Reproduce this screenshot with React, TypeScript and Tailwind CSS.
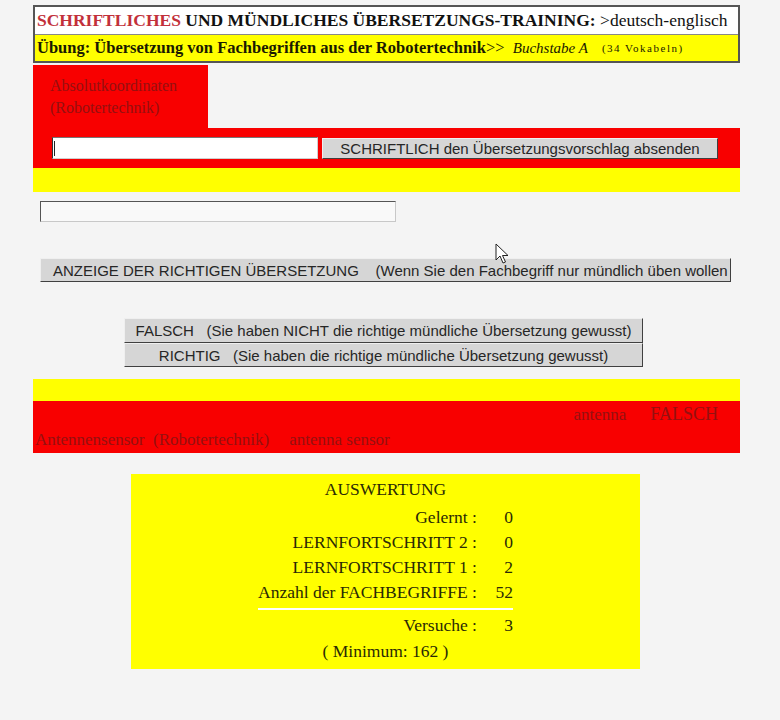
import React from "react";

const serif = { fontFamily: "'Liberation Serif', 'Times New Roman', serif" };

function Cursor() {
  return (
    <svg width="14" height="22" viewBox="0 0 14 22" fill="none">
      <path d="M1 1L1 17L5 13L8 20L10.5 19L7.5 12.5L13 12.5Z" fill="white" stroke="#222" strokeWidth="1" strokeLinejoin="round" />
    </svg>
  );
}

function GrayButton({ children, className }: { children: React.ReactNode; className: string }) {
  return (
    <div
      className={`bg-[#d6d6d6] border border-[#efefef] border-r-[#404040] border-b-[#404040] text-[15px] leading-none text-[#262626] whitespace-pre overflow-hidden flex items-center font-['Liberation_Sans',Arial,sans-serif] ${className}`}
    >
      {children}
    </div>
  );
}

const stats: [string, string][] = [
  ["Gelernt :", "0"],
  ["LERNFORTSCHRITT 2 :", "0"],
  ["LERNFORTSCHRITT 1 :", "2"],
  ["Anzahl der FACHBEGRIFFE :", "52"],
];

export default function App() {
  return (
    <div className="relative w-[780px] h-[720px] bg-[#f4f4f4] pt-[5px] overflow-hidden" style={serif}>
      <div className="ml-[33px] w-[707px] flex flex-col">
        {/* ── Title box ── */}
        <div className="border-2 border-[#555]">
          <div className="bg-white h-[27px] flex items-center px-[2px] text-[17.5px] font-bold text-[#111] whitespace-nowrap overflow-hidden">
            <span className="text-[#c2303a]">SCHRIFTLICHES</span>
            <span>&nbsp;UND MÜNDLICHES ÜBERSETZUNGS-TRAINING:</span>
            <span className="font-normal">&nbsp;&gt;deutsch-englisch</span>
          </div>
          <div className="bg-[#ffff00] h-[27px] border-t border-[#888] flex items-center px-[2px] text-[16.5px] text-[#1a1a00] whitespace-nowrap overflow-hidden">
            <span className="font-bold">Übung: Übersetzung von Fachbegriffen aus der Robotertechnik</span>
            <span>&gt;&gt;&nbsp;&nbsp; </span>
            <span className="italic text-[15px]">Buchstabe A</span>
            <span className="text-[11px] tracking-[1.5px] ml-[14px]">(34 Vokabeln)</span>
          </div>
        </div>

        {/* ── Term tab ── */}
        <div className="mt-[2px] w-[175px] h-[63px] bg-[#f80000] pl-[17px] pt-[10px] text-[16px] leading-[22px] text-[#951010]">
          <div>Absolutkoordinaten</div>
          <div>(Robotertechnik)</div>
        </div>

        {/* ── Written answer bar ── */}
        <div className="h-[40px] bg-[#f80000] flex items-center pl-[19px]">
          <div className="w-[266px] h-[22px] bg-white border border-[#cfcfcf] border-l-[#333] border-t-[#777] flex items-center">
            <div className="w-px h-[15px] bg-[#222] ml-[1px]" />
          </div>
          <GrayButton className="ml-[4px] w-[396px] h-[21px] justify-center">
            SCHRIFTLICH den Übersetzungsvorschlag absenden
          </GrayButton>
        </div>
        <div className="h-[24px] bg-[#ffff00]" />

        {/* ── Answer field ── */}
        <div className="mt-[9px] ml-[7px] w-[356px] h-[21px] bg-[#f9f9f9] border border-[#c8c8c8] border-t-[#555] border-l-[#555]" />

        <GrayButton className="mt-[36px] ml-[7px] w-[691px] h-[24px] pl-[12px]">
          {"ANZEIGE DER RICHTIGEN ÜBERSETZUNG    (Wenn Sie den Fachbegriff nur mündlich üben wollen"}
        </GrayButton>

        {/* ── Oral answer buttons ── */}
        <div className="mt-[36px] ml-[91px] w-[519px] flex flex-col">
          <GrayButton className="h-[25px] justify-center">
            {"FALSCH   (Sie haben NICHT die richtige mündliche Übersetzung gewusst)"}
          </GrayButton>
          <GrayButton className="h-[24px] justify-center">
            {"RICHTIG   (Sie haben die richtige mündliche Übersetzung gewusst)"}
          </GrayButton>
        </div>

        {/* ── Result ── */}
        <div className="mt-[12px] h-[22px] bg-[#ffff00]" />
        <div className="h-[52px] bg-[#f80000] text-[#951010] flex flex-col">
          <div className="flex justify-end items-end gap-[24px] pr-[22px] h-[22px]">
            <span className="text-[17px] leading-none">antenna</span>
            <span className="text-[18px] leading-none">FALSCH</span>
          </div>
          <div className="flex gap-[20px] pl-[2px] mt-[7px] text-[17px] leading-[20px]">
            <span>Antennensensor&nbsp; (Robotertechnik)</span>
            <span>antenna sensor</span>
          </div>
        </div>

        {/* ── Evaluation ── */}
        <div className="mt-[21px] ml-[98px] w-[509px] h-[195px] bg-[#ffff00] flex flex-col items-center pt-[5px] text-[17.5px] text-[#2a2a05]">
          <div className="leading-[20px]">AUSWERTUNG</div>
          <div className="mt-[8px] grid grid-cols-[auto_36px] gap-y-[5px] leading-[20px]">
            {stats.map(([label, value]) => (
              <React.Fragment key={label}>
                <div className="text-right">{label}</div>
                <div className="text-right">{value}</div>
              </React.Fragment>
            ))}
            <div className="col-span-2 h-[2px] bg-white mt-[1px]" />
            <div className="text-right">Versuche :</div>
            <div className="text-right">3</div>
          </div>
          <div className="mt-[6px] leading-[20px]">( Minimum: 162 )</div>
        </div>
      </div>

      <div className="absolute left-[495px] top-[243px]">
        <Cursor />
      </div>
    </div>
  );
}
